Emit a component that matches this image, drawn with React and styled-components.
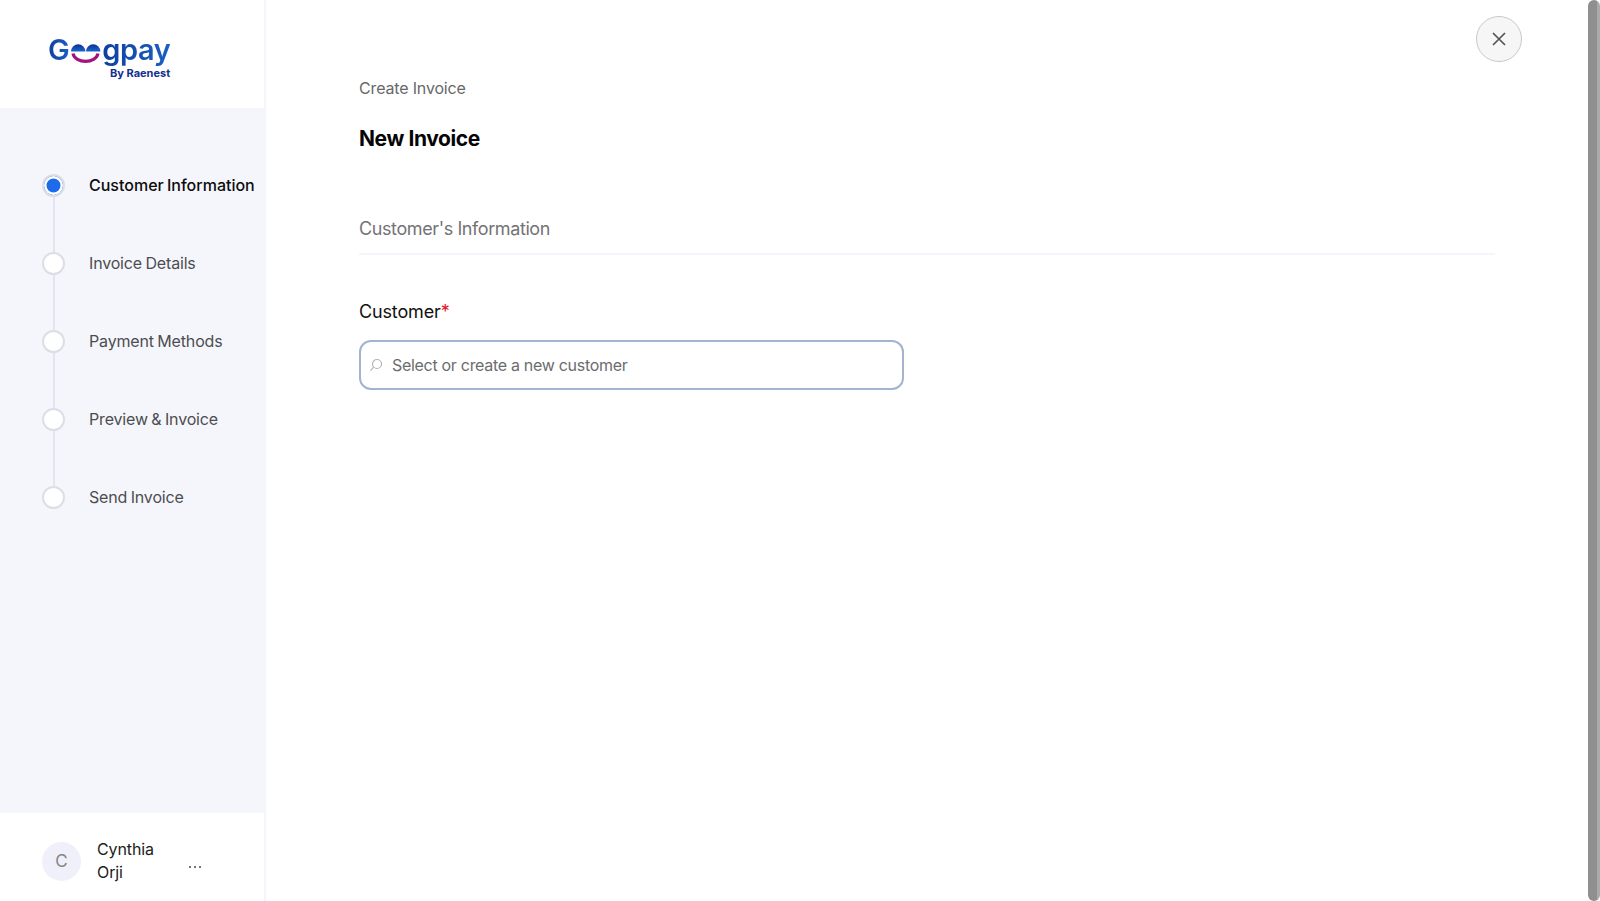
import styled, { createGlobalStyle } from "styled-components";

const GlobalStyle = createGlobalStyle`
  html, body {
    margin: 0;
    height: 100%;
    overflow: hidden;
    background: #fff;
    font-family: "Inter", "Open Sans", sans-serif;
  }
  * { box-sizing: border-box; }
`;

const Page = styled.div`
  display: flex;
  height: 901px;
  width: 1600px;
`;

const Sidebar = styled.aside`
  width: 266px;
  flex: none;
  display: flex;
  flex-direction: column;
  border-right: 2px solid #f5f6fc;
`;

const LogoBar = styled.div`
  height: 108px;
  flex: none;
  padding: 34px 0 0 48px;
`;

const LogoRow = styled.div`
  display: flex;
  align-items: flex-start;
  height: 33px;
`;

const LogoText = styled.span`
  font-family: "Inter", sans-serif;
  font-weight: 600;
  font-size: 29px;
  line-height: 32px;
  letter-spacing: -0.4px;
  background: linear-gradient(90deg, #0f3f9f, #1a5fc4);
  -webkit-background-clip: text;
  background-clip: text;
  color: transparent;
`;

const LogoSub = styled.div`
  font-family: "Inter", sans-serif;
  font-weight: 700;
  font-size: 11px;
  line-height: 12px;
  color: #14308f;
  margin: 0 0 0 62px;
  white-space: nowrap;
`;

const Steps = styled.ol`
  flex: 1;
  list-style: none;
  margin: 0;
  padding: 66px 0 0 42px;
  background: #f5f6fc;
`;

const Step = styled.li`
  display: flex;
  align-items: flex-start;
  gap: 24px;
  height: 78px;
`;

const Marker = styled.div`
  display: flex;
  flex-direction: column;
  align-items: center;
  width: 23px;
  height: 100%;
`;

const Dot = styled.span`
  width: 23px;
  height: 23px;
  flex: none;
  border-radius: 50%;
  border: 2px solid #dcdee6;
  background: ${(p) => (p.$active ? "#1d6bea" : "#fff")};
  box-shadow: ${(p) => (p.$active ? "inset 0 0 0 2.5px #fff" : "none")};
`;

const Connector = styled.span`
  width: 2px;
  flex: 1;
  background: #e2e4f2;
`;

const StepLabel = styled.span`
  font-size: 16px;
  line-height: 23px;
  white-space: nowrap;
  word-spacing: ${(p) => (p.$active ? "-1px" : "-0.8px")};
  letter-spacing: ${(p) => (p.$active ? "0" : "-0.17px")};
  font-weight: ${(p) => (p.$active ? 500 : 400)};
  color: ${(p) => (p.$active ? "#0c0c0c" : "#4d4d4f")};
`;

const UserBar = styled.div`
  height: 90px;
  flex: none;
  display: flex;
  align-items: center;
  padding: 0 0 0 42px;
  border-top: 2px solid #f5f6fc;
`;

const Avatar = styled.div`
  width: 39px;
  height: 39px;
  flex: none;
  border-radius: 50%;
  background: #f0f0fa;
  color: #858585;
  font-size: 17px;
  display: flex;
  align-items: center;
  justify-content: center;
  margin-top: 8px;
`;

const UserName = styled.div`
  width: 70px;
  margin: 8px 0 0 16px;
  font-size: 16px;
  line-height: 23px;
  letter-spacing: -0.1px;
  color: #1c1c1c;
`;

const Dots = styled.span`
  display: flex;
  gap: 3px;
  margin: 20px 0 0 22px;
`;

const DotSmall = styled.i`
  width: 2px;
  height: 2px;
  border-radius: 50%;
  background: #4a4a4a;
`;

const Main = styled.main`
  flex: 1;
  position: relative;
  min-width: 0;
  padding: 16px 93px 0 93px;
`;

const Crumb = styled.div`
  margin-top: 61px;
  font-size: 16px;
  line-height: 22px;
  letter-spacing: -0.16px;
  color: #68686a;
`;

const Title = styled.h1`
  margin: 25px 0 0;
  font-size: 21px;
  line-height: 30px;
  font-weight: 700;
  letter-spacing: -0.4px;
  color: #050505;
`;

const SectionHead = styled.h2`
  margin: 60px 0 0;
  height: 41px;
  padding-top: 3px;
  font-size: 18px;
  line-height: 24px;
  font-weight: 400;
  letter-spacing: -0.4px;
  color: #737375;
  border-bottom: 2px solid #f5f6fc;
`;

const FieldLabel = styled.label`
  display: block;
  margin-top: 44px;
  font-size: 18px;
  line-height: 26px;
  letter-spacing: -0.15px;
  color: #111;
`;

const Required = styled.span`
  color: #e8132b;
`;

const SearchBox = styled.div`
  margin-top: 15px;
  width: 545px;
  height: 50px;
  display: flex;
  align-items: center;
  gap: 9px;
  padding-left: 8px;
  border: 2px solid #a4b3cf;
  border-radius: 12px;
  background: #fff;
`;

const SearchText = styled.span`
  font-size: 16px;
  letter-spacing: -0.3px;
  color: #6c6c6e;
`;

const CloseButton = styled.button`
  position: absolute;
  top: 16px;
  right: 66px;
  width: 46px;
  height: 46px;
  padding: 0;
  border-radius: 50%;
  border: 1px solid #c8c8c8;
  background: #f6f6f6;
  display: flex;
  align-items: center;
  justify-content: center;
`;

const Scrollbar = styled.div`
  width: 12px;
  flex: none;
  height: 901px;
  border-radius: 6px;
  background: linear-gradient(90deg, #8f8f8f 0 75%, #aaaaaa 75% 100%);
`;

const steps = ["Customer Information", "Invoice Details", "Payment Methods", "Preview & Invoice", "Send Invoice"];

function LogoFace() {
  return (
    <svg width="33" height="32" viewBox="0 0 33 32" style={{ marginTop: 3 }}>
      <defs>
        <linearGradient id="eye" x1="0" y1="0" x2="0" y2="1">
          <stop offset="0" stopColor="#0e2f97" />
          <stop offset="1" stopColor="#1c66cc" />
        </linearGradient>
      </defs>
      <path d="M2 14.5a7.2 7.2 0 0 1 14.4 0z" fill="url(#eye)" />
      <path d="M17 14.5a7.2 7.2 0 0 1 14.4 0z" fill="url(#eye)" />
      <path d="M4 16.5c2 10.5 23 10.5 25 0" fill="none" stroke="#a3127f" strokeWidth="3.2" />
    </svg>
  );
}

export default function App() {
  return (
    <Page>
      <GlobalStyle />
      <Sidebar>
        <LogoBar>
          <LogoRow>
            <LogoText>G</LogoText>
            <LogoFace />
            <LogoText>gpay</LogoText>
          </LogoRow>
          <LogoSub>By Raenest</LogoSub>
        </LogoBar>
        <Steps>
          {steps.map((s, i) => (
            <Step key={s}>
              <Marker>
                <Dot $active={i === 0} />
                {i < steps.length - 1 && <Connector />}
              </Marker>
              <StepLabel $active={i === 0}>{s}</StepLabel>
            </Step>
          ))}
        </Steps>
        <UserBar>
          <Avatar>C</Avatar>
          <UserName>Cynthia Orji</UserName>
          <Dots>
            <DotSmall />
            <DotSmall />
            <DotSmall />
          </Dots>
        </UserBar>
      </Sidebar>
      <Main>
        <Crumb>Create Invoice</Crumb>
        <Title>New Invoice</Title>
        <SectionHead>Customer's Information</SectionHead>
        <FieldLabel>
          Customer<Required>*</Required>
        </FieldLabel>
        <SearchBox>
          <svg width="14" height="14" viewBox="0 0 14 14" fill="none" stroke="#b4b4b4" strokeWidth="1.2">
            <circle cx="8" cy="6" r="4.5" />
            <path d="M4.6 9.2 1.5 12.6" />
          </svg>
          <SearchText>Select or create a new customer</SearchText>
        </SearchBox>
        <CloseButton aria-label="Close">
          <svg width="16" height="16" viewBox="0 0 16 16" fill="none" stroke="#555" strokeWidth="1.7">
            <path d="M2 2l12 12M14 2 2 14" />
          </svg>
        </CloseButton>
      </Main>
      <Scrollbar />
    </Page>
  );
}
